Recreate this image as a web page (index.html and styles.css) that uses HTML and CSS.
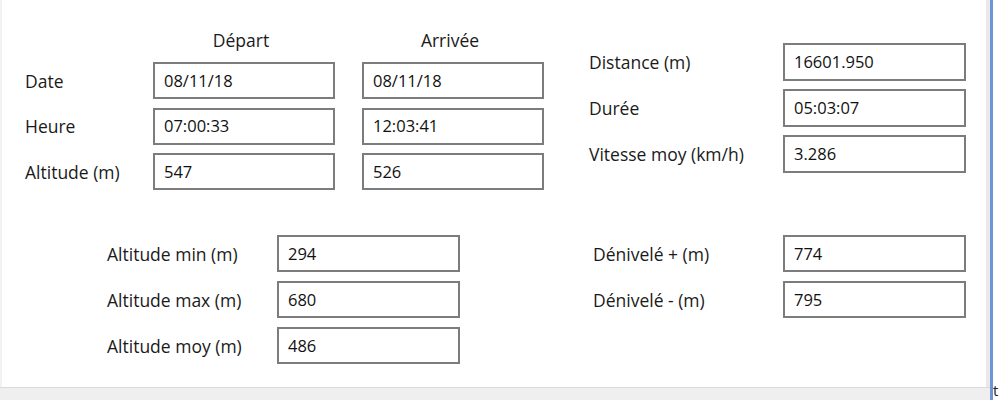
FILE: index.html
```html
<!doctype html>
<html lang="fr">
  <head>
    <meta charset="utf-8">
    <title>Statistiques du parcours</title>
    <link rel="stylesheet" href="styles.css">
  </head>
  <body>
    <div id="window">
      <div id="form">
        <main id="panel">
          <div class="section top">
            <div class="trip">
              <div></div>
              <div class="head">Départ</div>
              <div class="head">Arrivée</div>

              <div class="label">Date</div>
              <div class="field">08/11/18</div>
              <div class="field">08/11/18</div>

              <div class="label">Heure</div>
              <div class="field">07:00:33</div>
              <div class="field">12:03:41</div>

              <div class="label">Altitude (m)</div>
              <div class="field">547</div>
              <div class="field">526</div>
            </div>

            <div class="summary">
              <div class="label">Distance (m)</div>
              <div class="field">16601.950</div>
              <div class="label">Durée</div>
              <div class="field">05:03:07</div>
              <div class="label">Vitesse moy (km/h)</div>
              <div class="field">3.286</div>
            </div>
          </div>

          <div class="section bottom">
            <div class="stats">
              <div class="label">Altitude min (m)</div>
              <div class="field">294</div>
              <div class="label">Altitude max (m)</div>
              <div class="field">680</div>
              <div class="label">Altitude moy (m)</div>
              <div class="field">486</div>
            </div>

            <div class="deniv">
              <div class="label">Dénivelé + (m)</div>
              <div class="field">774</div>
              <div class="label">Dénivelé - (m)</div>
              <div class="field">795</div>
            </div>
          </div>
        </main>
        <div id="status"></div>
      </div>
      <div id="splitter"></div>
      <div id="beyond"><span>t</span></div>
    </div>
  </body>
</html>
```

FILE: styles.css
```css
html, body {
  margin: 0;
  background: white;
}
body {
  font-family: "Open Sans", "Noto Sans", sans-serif;
  font-size: 17.5px;
  color: #1a1a1a;
}
#window {
  display: flex;
  width: 1000px;
  height: 400px;
  overflow: hidden;
}
#form {
  width: 990px;
  display: flex;
  flex-direction: column;
}
#panel {
  height: 387px;
  border-left: 2px solid #f2f2f2;
  border-right: 4px solid #e9e9e9;
  background: white;
  box-sizing: border-box;
}
#status {
  flex: 1;
  background: #efefef;
  border-top: 1px solid #dadada;
}
#splitter {
  width: 3px;
  background: #6b95d6;
}
#beyond {
  flex: 1;
  display: flex;
  align-items: flex-end;
  padding-bottom: 2px;
}
#beyond span {
  font-size: 15px;
  line-height: 15px;
  color: #222;
}
.section {
  display: flex;
}
.top {
  padding-left: 23px;
}
.bottom {
  padding-left: 105px;
  margin-top: 45px;
}
.trip {
  display: grid;
  grid-template-columns: 101px 182px 182px;
  grid-auto-rows: 37px;
  grid-template-rows: 23.5px;
  column-gap: 27px;
  row-gap: 8.5px;
  padding-top: 30px;
}
.head {
  text-align: center;
  line-height: 20px;
  padding-right: 6px;
}
.summary {
  display: grid;
  grid-template-columns: 194px 183px;
  grid-auto-rows: 38px;
  row-gap: 8px;
  padding-top: 43px;
  margin-left: 45px;
  align-self: flex-start;
}
.stats {
  display: grid;
  grid-template-columns: 170px 183px;
  grid-auto-rows: 37px;
  row-gap: 9px;
}
.deniv {
  display: grid;
  grid-template-columns: 190px 183px;
  grid-auto-rows: 37px;
  row-gap: 9px;
  margin-left: 133px;
  align-self: flex-start;
}
.label {
  display: flex;
  align-items: center;
  white-space: nowrap;
}
.field {
  display: flex;
  align-items: center;
  padding-left: 9px;
  padding-bottom: 1px;
  border: 2px solid #7c7c7c;
  font-size: 16.5px;
  color: #111;
}
```
